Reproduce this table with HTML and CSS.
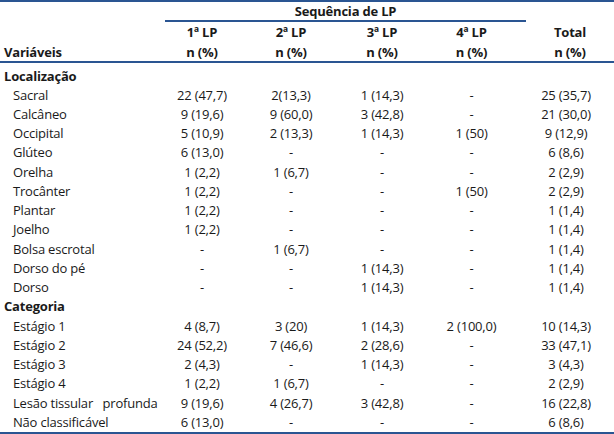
FILE: index.html
```html
<!DOCTYPE html>
<html lang="pt">
<head>
<meta charset="utf-8">
<link rel="stylesheet" href="styles.css">
</head>
<body>
<table class="tbl">
  <colgroup>
    <col class="c-var"><col class="c1"><col class="c2"><col class="c3"><col class="c4"><col class="c5">
  </colgroup>
  <thead>
    <tr class="h1">
      <th></th>
      <th colspan="4" class="seq"><div class="seq-line">Sequência de LP</div></th>
      <th></th>
    </tr>
    <tr class="h2">
      <th></th>
      <th>1ª LP</th><th>2ª LP</th><th>3ª LP</th><th>4ª LP</th><th>Total</th>
    </tr>
    <tr class="h3">
      <th class="lft">Variáveis</th>
      <th>n (%)</th><th>n (%)</th><th>n (%)</th><th>n (%)</th><th>n (%)</th>
    </tr>
  </thead>
  <tbody>
    <tr class="grp first"><td colspan="6">Localização</td></tr>
    <tr><td>Sacral</td><td>22 (47,7)</td><td>2(13,3)</td><td>1 (14,3)</td><td>-</td><td>25 (35,7)</td></tr>
    <tr><td>Calcâneo</td><td>9 (19,6)</td><td>9 (60,0)</td><td>3 (42,8)</td><td>-</td><td>21 (30,0)</td></tr>
    <tr><td>Occipital</td><td>5 (10,9)</td><td>2 (13,3)</td><td>1 (14,3)</td><td>1 (50)</td><td>9 (12,9)</td></tr>
    <tr><td>Glúteo</td><td>6 (13,0)</td><td>-</td><td>-</td><td>-</td><td>6 (8,6)</td></tr>
    <tr><td>Orelha</td><td>1 (2,2)</td><td>1 (6,7)</td><td>-</td><td>-</td><td>2 (2,9)</td></tr>
    <tr><td>Trocânter</td><td>1 (2,2)</td><td>-</td><td>-</td><td>1 (50)</td><td>2 (2,9)</td></tr>
    <tr><td>Plantar</td><td>1 (2,2)</td><td>-</td><td>-</td><td>-</td><td>1 (1,4)</td></tr>
    <tr><td>Joelho</td><td>1 (2,2)</td><td>-</td><td>-</td><td>-</td><td>1 (1,4)</td></tr>
    <tr><td>Bolsa escrotal</td><td>-</td><td>1 (6,7)</td><td>-</td><td>-</td><td>1 (1,4)</td></tr>
    <tr><td>Dorso do pé</td><td>-</td><td>-</td><td>1 (14,3)</td><td>-</td><td>1 (1,4)</td></tr>
    <tr><td>Dorso</td><td>-</td><td>-</td><td>1 (14,3)</td><td>-</td><td>1 (1,4)</td></tr>
    <tr class="grp"><td colspan="6">Categoria</td></tr>
    <tr><td>Estágio 1</td><td>4 (8,7)</td><td>3 (20)</td><td>1 (14,3)</td><td>2 (100,0)</td><td>10 (14,3)</td></tr>
    <tr><td>Estágio 2</td><td>24 (52,2)</td><td>7 (46,6)</td><td>2 (28,6)</td><td>-</td><td>33 (47,1)</td></tr>
    <tr><td>Estágio 3</td><td>2 (4,3)</td><td>-</td><td>1 (14,3)</td><td>-</td><td>3 (4,3)</td></tr>
    <tr><td>Estágio 4</td><td>1 (2,2)</td><td>1 (6,7)</td><td>-</td><td>-</td><td>2 (2,9)</td></tr>
    <tr><td>Lesão tissular&nbsp;&nbsp; profunda</td><td>9 (19,6)</td><td>4 (26,7)</td><td>3 (42,8)</td><td>-</td><td>16 (22,8)</td></tr>
    <tr><td>Não classificável</td><td>6 (13,0)</td><td>-</td><td>-</td><td>-</td><td>6 (8,6)</td></tr>
  </tbody>
</table>
</body>
</html>
```
FILE: styles.css
```css
html, body {
  margin: 0;
  padding: 0;
  background: #ffffff;
}
.tbl {
  width: 614px;
  border-collapse: separate;
  border-spacing: 0;
  table-layout: fixed;
  font-family: "Open Sans", "Noto Sans", sans-serif;
  font-size: 13px;
  letter-spacing: -0.2px;
  color: #1a1a1a;
  border-top: 2px solid #2a5592;
  border-bottom: 2px solid #2a5592;
}
.c-var { width: 160px; }
.c1 { width: 84px; }
.c2 { width: 94px; }
.c3 { width: 88px; }
.c4 { width: 100px; }
.c5 { width: 88px; }

.tbl th {
  font-weight: 700;
  text-align: center;
  padding: 0;
  white-space: nowrap;
}
.tbl th.lft { text-align: left; padding-left: 4px; }

.h1 th { line-height: 18px; padding: 0; }
.seq-line {
  margin-left: 5px;
  border-bottom: 2px solid #2a5592;
  line-height: 18px;
}
.h2 th { line-height: 20px; }
.h3 th {
  line-height: 18px;
  padding-top: 1px;
  border-bottom: 2px solid #2a5592;
}
.h2 th:nth-child(5), .h3 th:nth-child(5) { padding-right: 9px; }

.tbl td {
  padding: 0;
  height: 19.25px;
  line-height: 16px;
  text-align: center;
  white-space: nowrap;
}
.tbl td:first-child { text-align: left; padding-left: 13px; }
.tbl td:nth-child(5) { padding-right: 9px; }
.tbl td:nth-child(6) { padding-right: 8px; }

.tbl tr.grp td {
  font-weight: 700;
  padding-left: 4px;
  padding-right: 0;
}
.tbl tr.grp.first td {
  height: 17px;
  padding-top: 5px;
  line-height: 16px;
  vertical-align: top;
}
```
